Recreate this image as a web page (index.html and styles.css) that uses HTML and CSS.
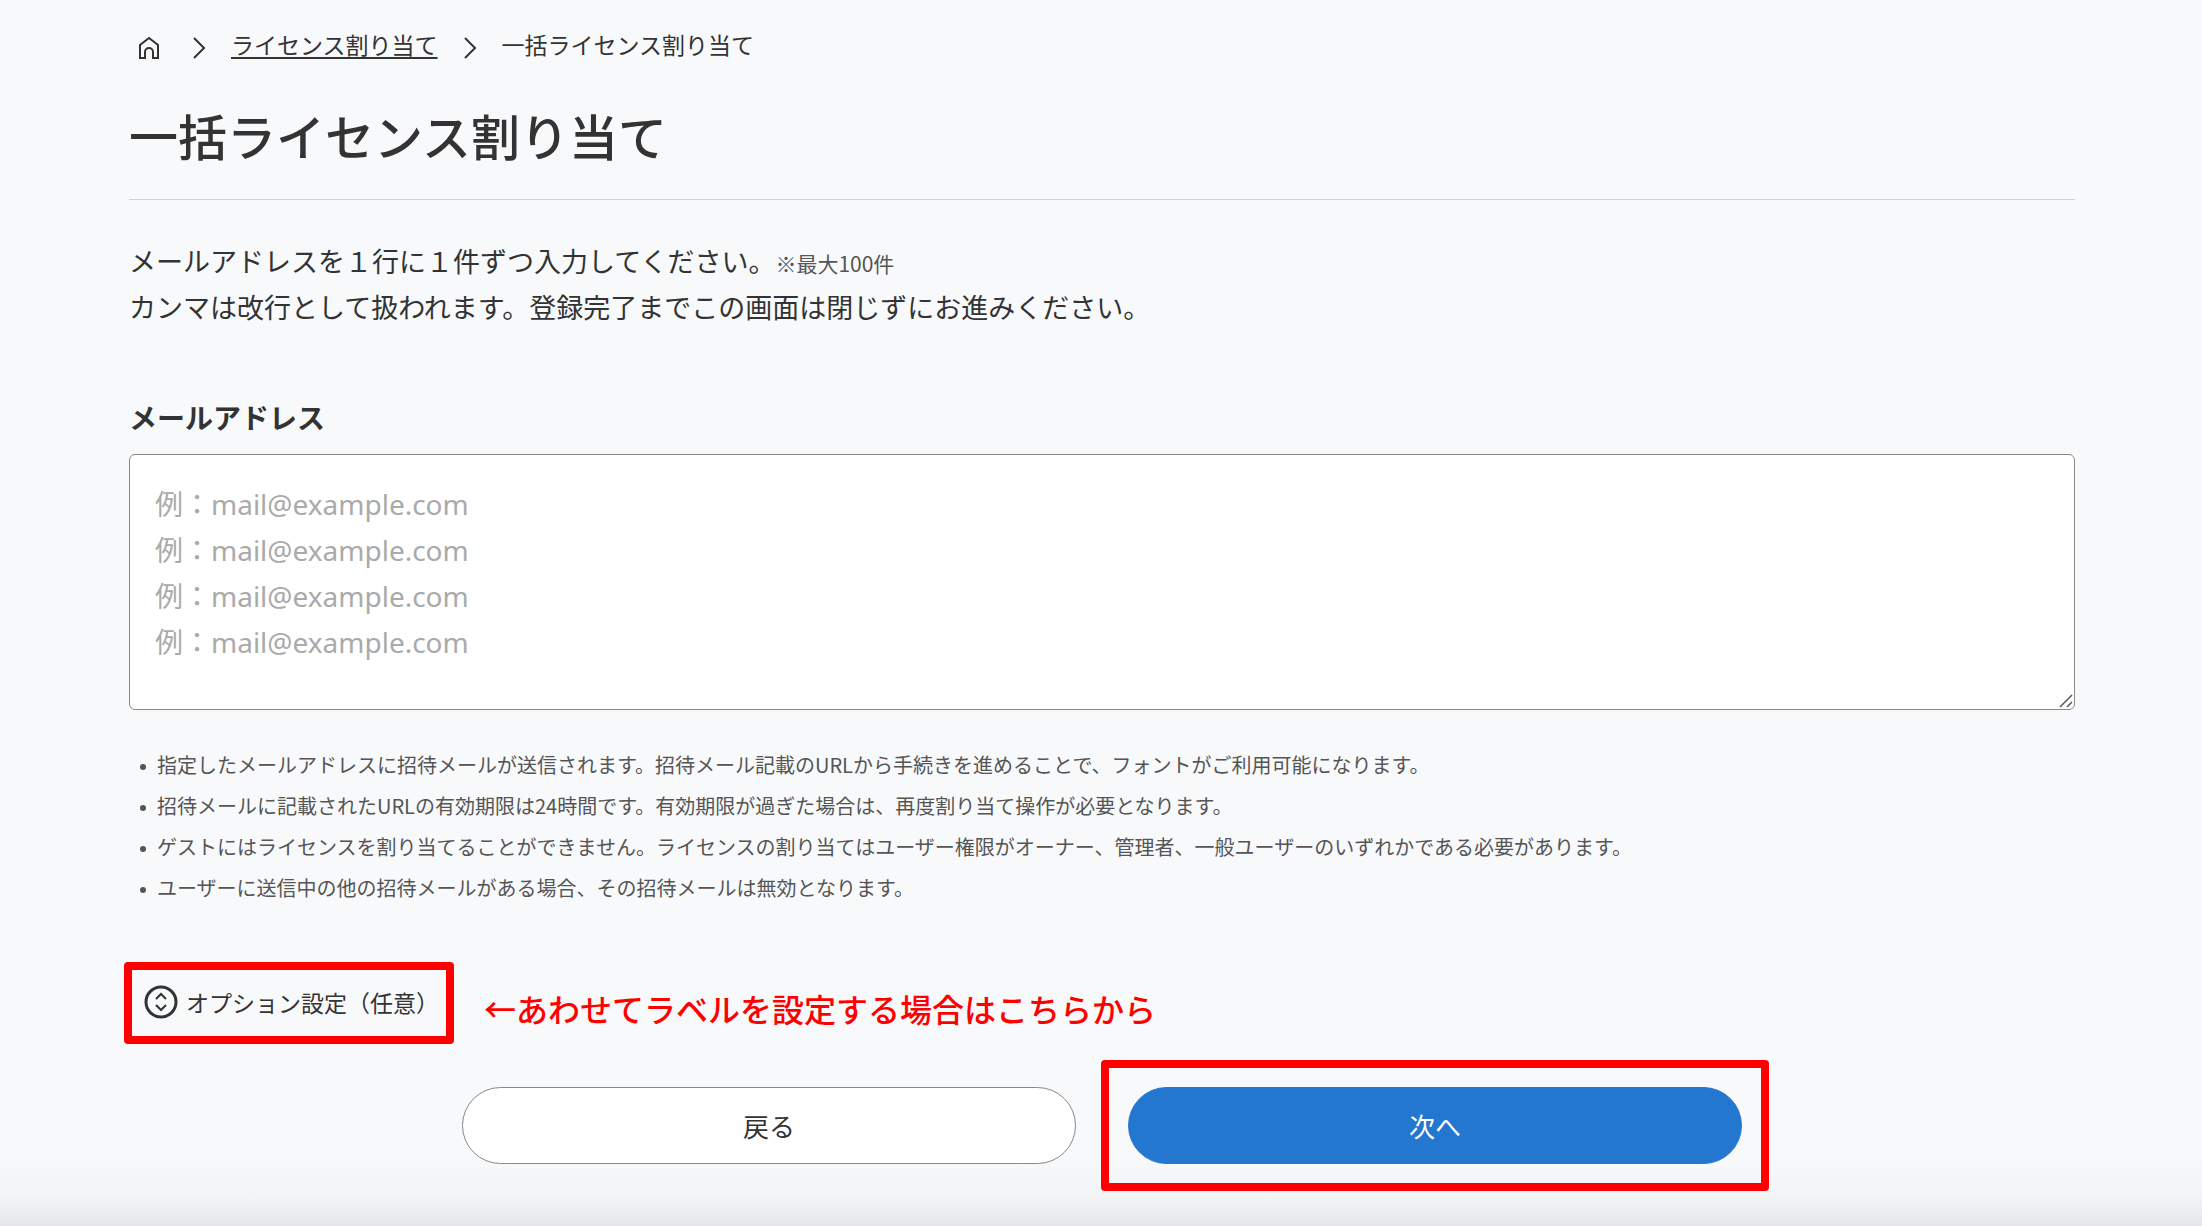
FILE: index.html
```html
<!DOCTYPE html>
<html lang="ja">
<head>
    <meta charset="UTF-8">
    <meta name="viewport" content="width=device-width, initial-scale=1.0">
    <title>一括ライセンス割り当て</title>
    <link rel="stylesheet" href="styles.css">
</head>
<body>
    <!-- Breadcrumb -->
    <nav class="breadcrumb" aria-label="パンくずリスト">
        <a class="home-link" href="#" aria-label="ホーム">
            <svg width="22" height="24" viewBox="0 0 22 24" fill="none" stroke="currentColor" stroke-width="2">
                <path d="M2 9 11 2l9 7v13h-5v-6a4 4 0 0 0-8 0v6H2z"/>
            </svg>
        </a>
        <svg class="chevron" width="14" height="24" viewBox="0 0 14 24" fill="none" stroke="currentColor" stroke-width="2">
            <path d="M2 2l10 10L2 22"/>
        </svg>
        <a class="crumb-link" href="#">ライセンス割り当て</a>
        <svg class="chevron" width="14" height="24" viewBox="0 0 14 24" fill="none" stroke="currentColor" stroke-width="2">
            <path d="M2 2l10 10L2 22"/>
        </svg>
        <span>一括ライセンス割り当て</span>
    </nav>

    <main>
        <h1>一括ライセンス割り当て</h1>

        <p class="intro">
            メールアドレスを１行に１件ずつ入力してください。<small>※最大100件</small><br>
            カンマは改行として扱われます。登録完了までこの画面は閉じずにお進みください。
        </p>

        <form>
            <!-- Mail addresses -->
            <label class="field-label" for="mails">メールアドレス</label>
            <textarea id="mails" placeholder="例：mail@example.com&#10;例：mail@example.com&#10;例：mail@example.com&#10;例：mail@example.com"></textarea>

            <ul class="notes">
                <li>指定したメールアドレスに招待メールが送信されます。招待メール記載のURLから手続きを進めることで、フォントがご利用可能になります。</li>
                <li>招待メールに記載されたURLの有効期限は24時間です。有効期限が過ぎた場合は、再度割り当て操作が必要となります。</li>
                <li>ゲストにはライセンスを割り当てることができません。ライセンスの割り当てはユーザー権限がオーナー、管理者、一般ユーザーのいずれかである必要があります。</li>
                <li>ユーザーに送信中の他の招待メールがある場合、その招待メールは無効となります。</li>
            </ul>

            <!-- Options -->
            <div class="option-row">
                <button type="button" class="option-toggle">
                    <svg width="34" height="34" viewBox="0 0 34 34" fill="none" stroke="currentColor">
                        <circle cx="17" cy="17" r="15" stroke-width="3"/>
                        <path d="M12 14l5-5 5 5M12 20l5 5 5-5" stroke-width="2"/>
                    </svg>
                    オプション設定（任意）
                </button>
                <p class="callout">←あわせてラベルを設定する場合はこちらから</p>
            </div>

            <!-- Buttons -->
            <div class="actions">
                <button type="button" class="btn">戻る</button>
                <div class="marked">
                    <button type="submit" class="btn btn-primary">次へ</button>
                </div>
            </div>
        </form>
    </main>
</body>
</html>
```
FILE: styles.css
```css
/* General Reset */
* {
    margin: 0;
    padding: 0;
    box-sizing: border-box;
}

/* Body Styling */
body {
    min-height: 100vh;
    padding: 28px 127px 60px 129px;
    font-family: "Noto Sans CJK JP", sans-serif;
    color: #333;
    background: linear-gradient(to top, #e5e6e8, #f2f3f5 28px, #f8f9fb 70px);
}

button,
textarea {
    font-family: inherit;
    color: inherit;
}

/* Breadcrumb */
.breadcrumb {
    display: flex;
    align-items: center;
    gap: 25px;
    padding-left: 9px;
    font-size: 23px;
    line-height: 32px;
}

.breadcrumb a {
    color: inherit;
}

.breadcrumb svg {
    display: block;
    margin-top: 8px;
}

.home-link {
    margin-right: 7px;
}

.crumb-link {
    text-decoration-thickness: 2px;
    text-underline-offset: 3px;
}

/* Heading */
h1 {
    margin-top: 43px;
    padding-bottom: 32px;
    border-bottom: 1px solid #d0d2d4;
    font-size: 49px;
    font-weight: 500;
    line-height: 64px;
}

.intro {
    margin-top: 38px;
    font-size: 27px;
    line-height: 46px;
}

.intro small {
    font-size: 21px;
    line-height: 1;
    color: #555;
}

/* Mail Address Field */
.field-label {
    display: block;
    margin-top: 67px;
    font-size: 28px;
    font-weight: 700;
    line-height: 40px;
}

textarea {
    display: block;
    width: 100%;
    height: 256px;
    margin-top: 17px;
    padding: 26px 25px;
    border: 1px solid #888;
    border-radius: 6px;
    background: #fff;
    font-family: "Noto Sans", "Noto Sans CJK JP", sans-serif;
    font-size: 28px;
    line-height: 46px;
    resize: vertical;
}

textarea::placeholder {
    color: #aaa;
}

textarea::-webkit-resizer {
    background: url("data:image/svg+xml,%3Csvg xmlns='http://www.w3.org/2000/svg' width='15' height='15' fill='none' stroke='%23555' stroke-width='1.5'%3E%3Cpath d='M1 13L13 1M8 13l5-5'/%3E%3C/svg%3E") no-repeat;
}

/* Notes */
.notes {
    margin-top: 34px;
    padding-left: 11px;
    list-style: none;
    font-size: 20px;
    line-height: 41px;
    color: #555;
}

.notes li {
    display: flex;
    align-items: center;
    gap: 11px;
}

.notes li::before {
    content: "";
    flex: none;
    width: 6px;
    height: 6px;
    margin-top: 4px;
    border-radius: 50%;
    background: #555;
}

/* Options */
.option-row {
    display: flex;
    align-items: flex-end;
    gap: 30px;
    margin-top: 54px;
}

.option-toggle {
    display: flex;
    align-items: center;
    gap: 8px;
    margin-left: -5px;
    padding: 15px 7px 17px 12px;
    border: 8px solid #f00;
    border-radius: 4px;
    background: none;
    font-size: 23px;
    line-height: 32px;
}

.callout {
    padding-bottom: 20px;
    font-size: 32px;
    font-weight: 500;
    line-height: 32px;
    color: #f00;
}

/* Buttons */
.actions {
    display: grid;
    grid-template-columns: 614px 614px;
    justify-content: center;
    gap: 52px;
    margin-top: 43px;
}

.btn {
    display: block;
    width: 100%;
    height: 77px;
    border: 1px solid #888;
    border-radius: 39px;
    background: #fff;
    font-size: 26px;
}

.btn-primary {
    border-color: #2477ce;
    background: #2477ce;
    color: #fff;
}

/* Red frame around the next button */
.marked {
    position: relative;
}

.marked::after {
    content: "";
    position: absolute;
    inset: -27px;
    border: 8px solid #f00;
    border-radius: 4px;
    pointer-events: none;
}
```
